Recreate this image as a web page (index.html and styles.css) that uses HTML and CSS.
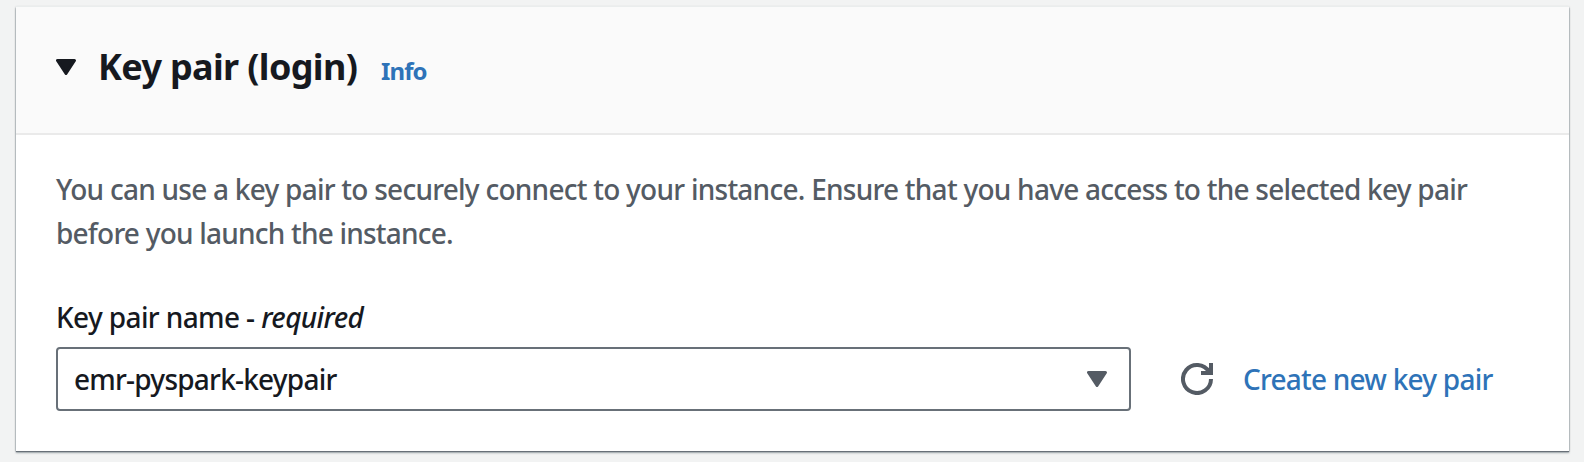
FILE: index.html
```html
<!DOCTYPE html>
<html lang="en">
<head>
<meta charset="utf-8">
<title>Key pair (login)</title>
<link rel="stylesheet" href="styles.css">
</head>
<body>
<section class="card">
  <header class="card-header">
    <svg class="caret" viewBox="0 0 20 16"><path d="M1.5 1.5h17L10 14.5z" fill="currentColor" stroke="currentColor" stroke-width="3" stroke-linejoin="round"/></svg>
    <h2 class="title">Key pair (login)</h2>
    <a class="info">Info</a>
  </header>
  <div class="card-body">
    <p class="description"><span class="line-one">You can use a key pair to securely connect to your instance. Ensure that you have access to the selected key pair</span><br><span class="line-two">before you launch the instance.</span></p>
    <div class="label"><span class="label-name">Key pair name -</span> <em class="required">required</em></div>
    <div class="row">
      <div class="select">
        <span class="value">emr-pyspark-keypair</span>
        <svg class="caret muted" viewBox="0 0 20 16"><path d="M1.5 1.5h17L10 14.5z" fill="currentColor" stroke="currentColor" stroke-width="3" stroke-linejoin="round"/></svg>
      </div>
      <svg class="refresh" viewBox="0 0 32 32"><path d="M30 16A14 14 0 1 1 28 8.800M30 0v10H20" fill="none" stroke="currentColor" stroke-width="4"/></svg>
      <a class="create">Create new key pair</a>
    </div>
  </div>
</section>
</body>
</html>
```
FILE: styles.css
```css
* { box-sizing: border-box; }
body {
  margin: 0;
  padding: 7px 15px 0 16px;
  height: 462px;
  overflow: hidden;
  background: #f2f3f3;
  font-family: "Noto Sans", "Open Sans", sans-serif;
  font-size: 28px;
  color: #16191f;
}
.card {
  height: 444px;
  background: #fff;
  box-shadow: 0 -1px 0 #eaeded, 0 1px 1px #687078, 0 2px 2px rgba(0, 28, 36, .3), 0 0 2px rgba(0, 28, 36, .3);
}
.card-header {
  display: flex;
  align-items: baseline;
  height: 128px;
  padding: 37px 40px 0;
  background: #fafafa;
  border-bottom: 2px solid #eaeaea;
}
.caret { width: 20px; height: 16px; flex: none; display: block; }
.card-header .caret { align-self: flex-start; margin-top: 15px; }
.muted { color: #545b64; }
.title {
  margin: 0 0 0 22px;
  width: 281px;
  font-size: 36px;
  line-height: 46px;
  font-weight: 700;
  letter-spacing: -.65px;
  white-space: nowrap;
}
.info { font-size: 24px; font-weight: 700; letter-spacing: -.9px; color: #2e73b8; margin-left: 2px; }
.card-body { padding: 32px 40px 0; }
.description { margin: 0; line-height: 44px; color: #545b64; white-space: nowrap; font-weight: 500; letter-spacing: -.75px; }
.line-two { letter-spacing: -.79px; }
.label { margin-top: 40px; line-height: 44px; font-weight: 500; white-space: nowrap; letter-spacing: -.62px; }
.row { display: flex; align-items: center; margin-top: 8px; height: 64px; letter-spacing: -.77px; }
.select {
  display: flex;
  align-items: center;
  justify-content: space-between;
  width: 1075px;
  height: 64px;
  padding: 0 22px 0 16px;
  border: 2px solid #687078;
  border-radius: 4px;
  font-weight: 500;
}
.refresh { width: 32px; height: 32px; margin-left: 50px; color: #545b64; flex: none; }
.create { margin-left: 30px; color: #2e73b8; font-weight: 500; white-space: nowrap; }
```
